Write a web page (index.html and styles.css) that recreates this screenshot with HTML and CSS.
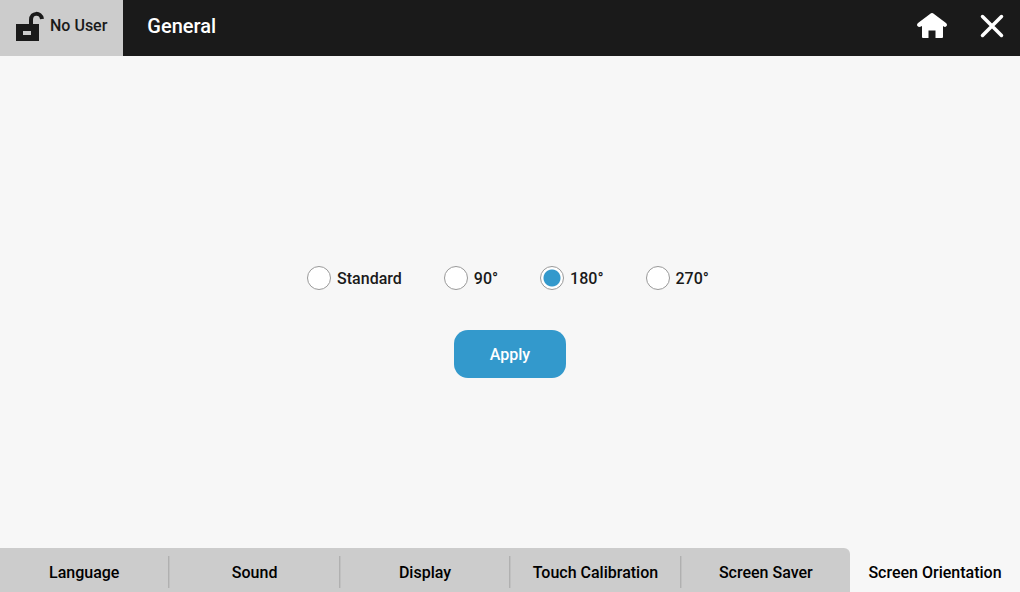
FILE: index.html
```
<!DOCTYPE html>
<html lang="en">
<head>
    <meta charset="UTF-8">
    <meta name="viewport" content="width=device-width, initial-scale=1.0">
    <title>General</title>
    <link rel="stylesheet" href="styles.css">
</head>
<body>
    <header class="header">
        <button type="button" class="user">
            <svg width="28" height="30" viewBox="0 0 28 30" aria-hidden="true">
                <path d="M0 13h23v17H0zM7 20v4h8v-4z" fill="#1a1a1a" fill-rule="evenodd"/>
                <path d="M15 14V9C15 1 25 1 26 8" fill="none" stroke="#1a1a1a" stroke-width="4"/>
            </svg>
            No User
        </button>
        <h1>General</h1>
        <button type="button" class="icon-button" aria-label="Home">
            <svg width="32" height="28" viewBox="0 0 32 28" aria-hidden="true">
                <path d="M16 1Q17 1 18 2L30 11Q32 13 30 14.500Q29 15.500 27 14V25Q27 26 26 26H19.500V18.500H12.500V26H7Q6 26 6 25V14Q3 15.500 2 14.500Q0 13 2 11L14 2Q15 1 16 1z" fill="#fff"/>
            </svg>
        </button>
        <button type="button" class="icon-button" aria-label="Close">
            <svg width="24" height="24" viewBox="0 0 24 24" aria-hidden="true">
                <path d="M2.500 2.500l19 19M21.500 2.500l-19 19" stroke="#fff" stroke-width="3.500" stroke-linecap="round"/>
            </svg>
        </button>
    </header>

    <main>
        <form id="orientationForm">
            <div class="options" role="radiogroup" aria-label="Screen Orientation">
                <label for="standard"><input type="radio" name="orientation" id="standard" value="0">Standard</label>
                <label for="rotate90"><input type="radio" name="orientation" id="rotate90" value="90">90°</label>
                <label for="rotate180"><input type="radio" name="orientation" id="rotate180" value="180" checked>180°</label>
                <label for="rotate270"><input type="radio" name="orientation" id="rotate270" value="270">270°</label>
            </div>
            <button type="button" class="apply">Apply</button>
        </form>
    </main>

    <nav class="tabs">
        <div class="tab-group">
            <a href="#language">Language</a>
            <span class="divider"></span>
            <a href="#sound">Sound</a>
            <span class="divider"></span>
            <a href="#display">Display</a>
            <span class="divider"></span>
            <a href="#calibration">Touch Calibration</a>
            <span class="divider"></span>
            <a href="#saver">Screen Saver</a>
        </div>
        <a href="#orientation" class="active" aria-current="page">Screen Orientation</a>
    </nav>
</body>
</html>
```
FILE: styles.css
```
* {
    box-sizing: border-box;
}

body {
    margin: 0;
    min-height: 100vh;
    display: flex;
    flex-direction: column;
    background-color: #f7f7f7;
    color: #1a1a1a;
    font-family: Roboto, sans-serif;
    font-size: 16px;
    font-weight: 500;
    line-height: 20px;
}

button {
    border: none;
    font: inherit;
    cursor: pointer;
}

.header {
    display: flex;
    height: 56px;
    background-color: #1a1a1a;
    color: white;
}

.header button,
.header h1 {
    display: flex;
    align-items: center;
    padding: 0 16px 4px;
}

.user {
    gap: 6px;
    background-color: #ccc;
    color: #1a1a1a;
}

.header h1 {
    flex: 1;
    margin: 0;
    padding-left: 24px;
    font-size: 20px;
    font-weight: 500;
}

.icon-button {
    background: none;
}

main {
    flex: 1;
    display: flex;
    align-items: center;
    justify-content: center;
    padding-top: 40px;
}

form {
    display: flex;
    flex-direction: column;
    align-items: center;
    gap: 40px;
    line-height: 19px;
}

.options {
    display: flex;
    gap: 42px;
    margin-right: 4px;
}

.options label {
    display: flex;
    align-items: center;
    gap: 6px;
}

input[type="radio"] {
    appearance: none;
    width: 24px;
    height: 24px;
    margin: 0;
    border: 1px solid #999;
    border-radius: 50%;
    background-color: white;
}

input[type="radio"]:checked {
    background-image: radial-gradient(circle, #3399cc 8px, transparent 9px);
}

.apply {
    width: 112px;
    height: 48px;
    border-radius: 14px;
    background-color: #3399cc;
    color: white;
}

.tabs {
    display: flex;
    height: 44px;
}

.tab-group {
    flex: 5 1 0;
    display: flex;
    border-top-right-radius: 6px;
    background-color: #ccc;
}

.tabs a {
    flex: 1 1 0;
    display: flex;
    align-items: center;
    justify-content: center;
    padding-top: 6px;
    color: black;
    text-decoration: none;
    white-space: nowrap;
}

.divider {
    width: 2px;
    margin: 8px 0 4px;
    border-left: 1px solid #b0b0b0;
    background-color: #c0c0c0;
}
```
